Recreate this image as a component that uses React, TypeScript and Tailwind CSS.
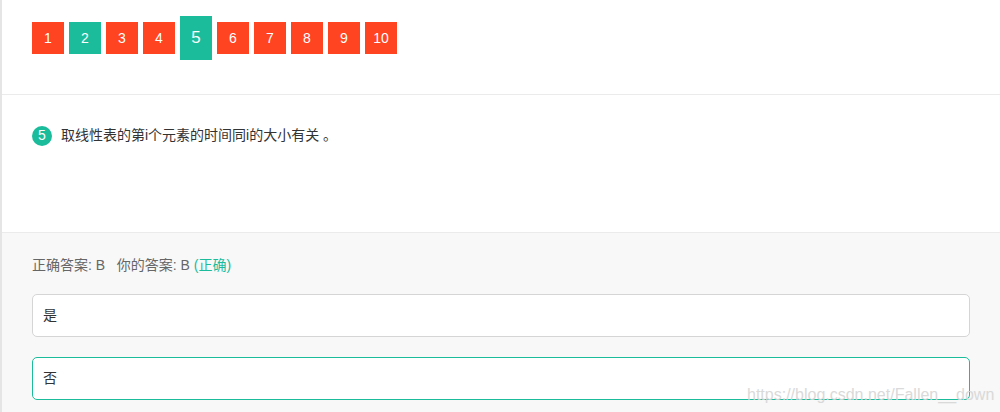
import React from "react"

const pages = [1, 2, 3, 4, 5, 6, 7, 8, 9, 10]

export default function App() {
  const current = 5
  const done = [2]

  return (
    <main
      className="relative w-[1000px] h-[412px] overflow-hidden bg-white border-l-2 border-[#e5e5e5] text-[#333]"
      style={{ fontFamily: '"Liberation Sans", "Noto Sans CJK SC", sans-serif' }}
    >
      {/* Question nav */}
      <div className="h-[95px] border-b border-[#ebebeb] pl-[30px] pt-4">
        <div className="flex items-center gap-[5px] h-[44px]">
          {pages.map((n) => {
            const active = n === current
            const green = active || done.includes(n)
            return (
              <div
                key={n}
                className={`w-8 flex items-center justify-center text-white ${
                  active ? "h-[44px] text-[17px]" : "h-8 text-[14px]"
                } ${green ? "bg-[#1abc9c]" : "bg-[#ff4422]"}`}
              >
                {n}
              </div>
            )
          })}
        </div>
      </div>

      {/* Question */}
      <div className="h-[138px] border-b border-[#ebebeb] pl-[30px] pt-[30px]">
        <div className="flex items-center gap-[9px]">
          <span className="w-5 h-5 rounded-full bg-[#1abc9c] text-white text-[14px] flex items-center justify-center">
            5
          </span>
          <span className="text-[14px] text-[#333]">取线性表的第i个元素的时间同i的大小有关 。</span>
        </div>
      </div>

      {/* Answer */}
      <div className="bg-[#f8f8f8] h-full pl-[30px] pr-[30px] pt-[22px]">
        <p className="text-[14px] text-[#666] leading-[20px]">
          正确答案: B &nbsp; 你的答案: B <span className="text-[#1abc9c]">(正确)</span>
        </p>
        <div className="mt-[19px] h-[43px] bg-white border border-[#d5d5d5] rounded-[5px] flex items-center px-[10px] text-[14px] text-[#333]">
          是
        </div>
        <div className="mt-[20px] h-[43px] bg-white border border-[#1abc9c] rounded-[5px] flex items-center px-[10px] text-[14px] text-[#333]">
          否
        </div>
      </div>

      <span className="absolute left-[745px] top-[383px] text-[16px] text-[#d6d6d6] opacity-90">
        https://blog.csdn.net/Fallen__down
      </span>
    </main>
  )
}
